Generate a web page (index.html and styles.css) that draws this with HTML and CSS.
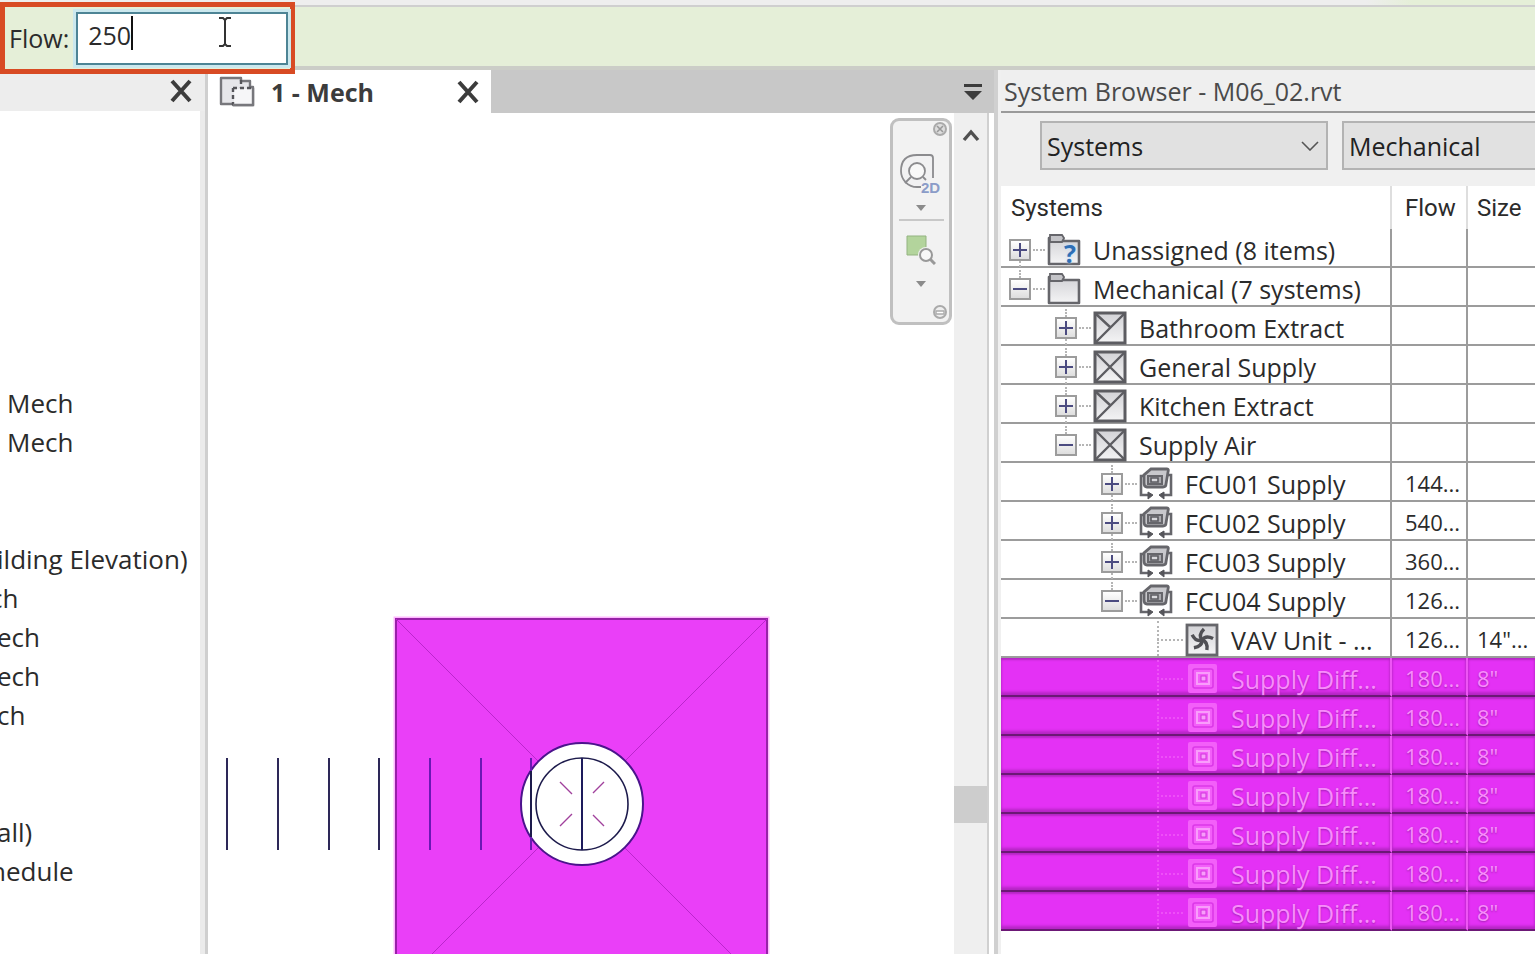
FILE: index.html
```
<!DOCTYPE html>
<html lang="en">
<head>
    <meta charset="UTF-8">
    <meta name="viewport" content="width=device-width, initial-scale=1.0">
    <title>System Browser - M06_02.rvt</title>
    <link rel="stylesheet" href="styles.css">
</head>
<body>
    <!-- Shared icons -->
    <svg class="icon-defs" aria-hidden="true">
        <defs>
            <linearGradient id="metal" x1="0" y1="0" x2="0" y2="1">
                <stop offset="0" stop-color="#d2d2d6" />
                <stop offset="1" stop-color="#f4f4f5" />
            </linearGradient>
        </defs>
        <symbol id="close" viewBox="0 0 24 24">
            <path d="M3 2l18 20M21 2L3 22" fill="none" stroke="#3c3c3c" stroke-width="4" />
        </symbol>
        <symbol id="folder" viewBox="0 0 34 34">
            <path d="M2 5h14v3h16v23H2z" fill="url(#metal)" stroke="#66666b" stroke-width="2.6" stroke-linejoin="round" />
            <path d="M3 2h12l2 3-2 4H3z" fill="#c4c4c8" stroke="#66666b" stroke-width="1.8" />
        </symbol>
        <symbol id="extract" viewBox="0 0 34 34">
            <rect x="2" y="2" width="30" height="30" fill="url(#metal)" stroke="#5c5c61" stroke-width="3" />
            <path d="M3 3l14 13M31 3L3 31" fill="none" stroke="#5c5c61" stroke-width="2.4" />
        </symbol>
        <symbol id="supply" viewBox="0 0 34 34">
            <rect x="2" y="2" width="30" height="30" fill="url(#metal)" stroke="#5c5c61" stroke-width="3" />
            <path d="M3 3l28 28M31 3L3 31" fill="none" stroke="#5c5c61" stroke-width="2.4" />
        </symbol>
        <symbol id="unit" viewBox="0 0 34 34">
            <path d="M6 9H2v19h9M28 8h4v20h-9" fill="none" stroke="#66666b" stroke-width="2.6" />
            <path d="M12 2h16q2 0 1 3l-2 12q0 3-3 3H8q-3 0-3-4V8z" fill="#c8c8cc" stroke="#66666b" stroke-width="2.8" />
            <path d="M9 9h14v8H9z" fill="#a9a9ae" stroke="#66666b" stroke-width="2" />
            <path d="M12 11h7v4h-7z" fill="#d8d8dc" stroke="#5c5c61" stroke-width="1.6" />
            <path d="M9 25l5 3-5 4zM25 25l-5 3 5 4z" fill="#55555a" stroke="#55555a" />
        </symbol>
        <symbol id="fan" viewBox="0 0 34 34">
            <rect x="2" y="2" width="30" height="30" fill="url(#metal)" stroke="#66666b" stroke-width="2.8" />
            <g fill="none" stroke="#505055" stroke-width="3.4">
                <path d="M17 17q-4-5 2-11" />
                <path d="M17 17q-4-5 2-11" transform="rotate(72 17 17)" />
                <path d="M17 17q-4-5 2-11" transform="rotate(144 17 17)" />
                <path d="M17 17q-4-5 2-11" transform="rotate(216 17 17)" />
                <path d="M17 17q-4-5 2-11" transform="rotate(288 17 17)" />
            </g>
        </symbol>
        <symbol id="diffuser" viewBox="0 0 34 34">
            <rect x="3" y="2" width="29" height="29" rx="2" fill="#f35ff9" />
            <rect x="8" y="7" width="20" height="19" rx="2" fill="none" stroke="#dc38e8" stroke-width="1.6" />
            <rect x="12" y="11" width="12" height="11" fill="none" stroke="#f99dfb" stroke-width="2" />
            <rect x="16" y="14" width="5" height="5" fill="#f99dfb" stroke="#cf35dc" />
        </symbol>
        <symbol id="arrow" viewBox="0 0 10 6">
            <path d="M0 0h10L5 6z" fill="#8b8b8b" />
        </symbol>
    </svg>

    <div class="ribbon-edge"></div>

    <form class="options-bar">
        <div class="flow-field">
            <label for="flow">Flow:</label>
            <input type="text" id="flow" value="250" />
            <span class="caret"></span>
            <svg class="text-cursor" viewBox="0 0 14 30">
                <path d="M1 1h4l2 2 2-2h4M1 29h4l2-2 2 2h4M7 2v26" fill="none" stroke="#333" stroke-width="2" />
            </svg>
        </div>
    </form>

    <main class="workspace">
        <aside class="project-browser">
            <header>
                <button type="button" class="icon-button" aria-label="Close project browser"><svg><use href="#close" /></svg></button>
            </header>
            <ul>
                <li class="nested">Mech</li>
                <li class="nested">Mech</li>
                <li></li>
                <li></li>
                <li>ilding Elevation)</li>
                <li class="cut">ch</li>
                <li>ech</li>
                <li>ech</li>
                <li>ch</li>
                <li></li>
                <li></li>
                <li>all)</li>
                <li class="cut">hedule</li>
            </ul>
        </aside>

        <section class="view">
            <div class="tabs">
                <div class="tab">
                    <svg class="tab-icon" viewBox="0 0 36 32">
                        <path d="M2 2h20v3h9v6h3v18H14v-1H2z" fill="#e6e6ea" stroke="#77777c" stroke-width="2.4" stroke-linejoin="round" />
                        <path d="M15 29V13h19v16z" fill="#f6f6f8" stroke="none" />
                        <path d="M14 12h19M14 12v17M22 4v8" fill="none" stroke="#55555a" stroke-width="2.4" stroke-dasharray="4 3" />
                        <path d="M34 12v17H14" fill="none" stroke="#77777c" stroke-width="2.4" />
                    </svg>
                    <span>1 - Mech</span>
                    <button type="button" class="icon-button" aria-label="Close tab"><svg><use href="#close" /></svg></button>
                </div>
                <button type="button" class="tab-menu" aria-label="Show views">
                    <svg viewBox="0 0 18 16"><path d="M0 0h18v3H0zM0 7h18l-9 9z" fill="#3c3c3c" /></svg>
                </button>
            </div>

            <div class="view-body">
                <div class="canvas">
                    <svg class="drawing">
                        <rect x="188" y="506" width="371" height="371" fill="#ea3ff8" stroke="#ffb8ff" stroke-width="5" />
                        <rect x="188" y="506" width="371" height="371" fill="#ea3ff8" stroke="#9722a8" stroke-width="2" />
                        <path d="M188 506l371 371M559 506L188 877" stroke="#bb25cd" />
                        <circle cx="374" cy="691" r="61" fill="#fff" stroke="#4b148c" stroke-width="2" />
                        <circle cx="374" cy="691" r="46" fill="none" stroke="#1d1b4c" stroke-width="1.6" />
                        <path d="M374 645v92" stroke="#1d1b5c" stroke-width="2" />
                        <path d="M352 669l12 12M396 669l-11 11M352 713l12-12M396 713l-11-11" stroke="#a0419c" stroke-width="1.4" />
                        <path d="M19 645v92M70 645v92M121 645v92M171 645v92" stroke="#2d2858" stroke-width="2" />
                        <path d="M222 645v92M273 645v92M323 645v92" stroke="#6b18b4" stroke-width="2" />
                        <path d="M323 658v66" stroke="#1d1b4c" stroke-width="2" />
                    </svg>

                    <div class="nav-bar">
                        <button type="button" class="nav-small" aria-label="Close navigation bar">
                            <svg viewBox="0 0 14 14"><circle cx="7" cy="7" r="6" fill="#ddd" stroke="#aaa" stroke-width="2" /><path d="M4 4l6 6M10 4l-6 6" stroke="#999" stroke-width="1.6" /></svg>
                        </button>
                        <button type="button" class="nav-wheel" aria-label="Steering wheel 2D">
                            <svg viewBox="0 0 44 42">
                                <path d="M22 34H18A16 16 0 0 1 2 18Q2 2 18 2h13q3 0 3 3v20" fill="#f1f1f2" stroke="#8b8b8e" stroke-width="1.8" />
                                <circle cx="18" cy="18" r="8" fill="#f8f8f8" stroke="#8b8b8e" stroke-width="1.8" />
                                <path d="M12 24l-6 6M24 24l3 3" stroke="#8b8b8e" stroke-width="1.8" />
                                <text x="22" y="40">2D</text>
                            </svg>
                        </button>
                        <svg class="nav-arrow"><use href="#arrow" /></svg>
                        <hr>
                        <button type="button" class="nav-zoom" aria-label="Zoom in region">
                            <svg viewBox="0 0 30 30">
                                <path d="M1 1h19v19H1z" fill="#b3d49c" stroke="#93b380" />
                                <circle cx="20" cy="20" r="8" fill="#f1f1f1" />
                                <circle cx="20" cy="20" r="6" fill="#f8f8f8" stroke="#999" stroke-width="2" />
                                <path d="M24 24l5 5" stroke="#999" stroke-width="3" />
                            </svg>
                        </button>
                        <svg class="nav-arrow"><use href="#arrow" /></svg>
                        <button type="button" class="nav-small nav-bottom" aria-label="Navigation bar options">
                            <svg viewBox="0 0 14 14"><circle cx="7" cy="7" r="6" fill="#eee" stroke="#aaa" stroke-width="2" /><path d="M3 6h8v3H3z" fill="#fff" stroke="#aaa" stroke-width="1.4" /></svg>
                        </button>
                    </div>
                </div>
                <div class="scrollbar">
                    <svg viewBox="0 0 18 13"><path d="M2 11l7-8 7 8" fill="none" stroke="#505050" stroke-width="3.4" /></svg>
                    <div class="thumb"></div>
                </div>
            </div>
        </section>

        <section class="system-browser">
            <h1>System Browser - M06_02.rvt</h1>
            <div class="filters">
                <div class="filter">
                    <select aria-label="View"><option>Systems</option></select>
                    <svg viewBox="0 0 18 10"><path d="M1 1l8 8 8-8" fill="none" stroke="#555" stroke-width="1.6" /></svg>
                </div>
                <div class="filter">
                    <select aria-label="Discipline"><option>Mechanical</option></select>
                </div>
            </div>

            <table>
                <colgroup>
                    <col class="col-systems">
                    <col class="col-flow">
                    <col>
                </colgroup>
                <thead>
                    <tr><th>Systems</th><th>Flow</th><th>Size</th></tr>
                </thead>
                <tbody>
                    <tr>
                        <td><div class="node root more"><button type="button" class="toggle" aria-label="Expand"></button><i></i><span class="unassigned"><svg><use href="#folder" /></svg><b>?</b></span><span>Unassigned (8 items)</span></div></td>
                        <td></td><td></td>
                    </tr>
                    <tr>
                        <td><div class="node"><button type="button" class="toggle open" aria-label="Collapse"></button><i></i><svg><use href="#folder" /></svg><span>Mechanical (7 systems)</span></div></td>
                        <td></td><td></td>
                    </tr>
                    <tr>
                        <td><div class="node level-1 more"><button type="button" class="toggle" aria-label="Expand"></button><i></i><svg><use href="#extract" /></svg><span>Bathroom Extract</span></div></td>
                        <td></td><td></td>
                    </tr>
                    <tr>
                        <td><div class="node level-1 more"><button type="button" class="toggle" aria-label="Expand"></button><i></i><svg><use href="#supply" /></svg><span>General Supply</span></div></td>
                        <td></td><td></td>
                    </tr>
                    <tr>
                        <td><div class="node level-1 more"><button type="button" class="toggle" aria-label="Expand"></button><i></i><svg><use href="#extract" /></svg><span>Kitchen Extract</span></div></td>
                        <td></td><td></td>
                    </tr>
                    <tr>
                        <td><div class="node level-1"><button type="button" class="toggle open" aria-label="Collapse"></button><i></i><svg><use href="#supply" /></svg><span>Supply Air</span></div></td>
                        <td></td><td></td>
                    </tr>
                    <tr>
                        <td><div class="node level-2 more"><button type="button" class="toggle" aria-label="Expand"></button><i></i><svg><use href="#unit" /></svg><span>FCU01 Supply</span></div></td>
                        <td>144...</td><td></td>
                    </tr>
                    <tr>
                        <td><div class="node level-2 more"><button type="button" class="toggle" aria-label="Expand"></button><i></i><svg><use href="#unit" /></svg><span>FCU02 Supply</span></div></td>
                        <td>540...</td><td></td>
                    </tr>
                    <tr>
                        <td><div class="node level-2 more"><button type="button" class="toggle" aria-label="Expand"></button><i></i><svg><use href="#unit" /></svg><span>FCU03 Supply</span></div></td>
                        <td>360...</td><td></td>
                    </tr>
                    <tr>
                        <td><div class="node level-2"><button type="button" class="toggle open" aria-label="Collapse"></button><i></i><svg><use href="#unit" /></svg><span>FCU04 Supply</span></div></td>
                        <td>126...</td><td></td>
                    </tr>
                    <tr>
                        <td><div class="node leaf"><i></i><svg><use href="#fan" /></svg><span>VAV Unit - ...</span></div></td>
                        <td>126...</td><td>14"...</td>
                    </tr>
                    <tr class="selected">
                        <td><div class="node leaf"><i></i><svg><use href="#diffuser" /></svg><span>Supply Diff...</span></div></td>
                        <td>180...</td><td>8"</td>
                    </tr>
                    <tr class="selected">
                        <td><div class="node leaf"><i></i><svg><use href="#diffuser" /></svg><span>Supply Diff...</span></div></td>
                        <td>180...</td><td>8"</td>
                    </tr>
                    <tr class="selected">
                        <td><div class="node leaf"><i></i><svg><use href="#diffuser" /></svg><span>Supply Diff...</span></div></td>
                        <td>180...</td><td>8"</td>
                    </tr>
                    <tr class="selected">
                        <td><div class="node leaf"><i></i><svg><use href="#diffuser" /></svg><span>Supply Diff...</span></div></td>
                        <td>180...</td><td>8"</td>
                    </tr>
                    <tr class="selected">
                        <td><div class="node leaf"><i></i><svg><use href="#diffuser" /></svg><span>Supply Diff...</span></div></td>
                        <td>180...</td><td>8"</td>
                    </tr>
                    <tr class="selected">
                        <td><div class="node leaf"><i></i><svg><use href="#diffuser" /></svg><span>Supply Diff...</span></div></td>
                        <td>180...</td><td>8"</td>
                    </tr>
                    <tr class="selected">
                        <td><div class="node leaf"><i></i><svg><use href="#diffuser" /></svg><span>Supply Diff...</span></div></td>
                        <td>180...</td><td>8"</td>
                    </tr>
                </tbody>
            </table>
        </section>
    </main>
</body>
</html>
```
FILE: styles.css
```
* {
    box-sizing: border-box;
}

body {
    margin: 0;
    height: 100vh;
    display: flex;
    flex-direction: column;
    overflow: hidden;
    background: #fff;
    color: #2b2b2b;
    font-family: "Open Sans", "Noto Sans", sans-serif;
    font-size: 25px;
    line-height: 32px;
}

button {
    padding: 0;
    border: none;
    background: none;
    cursor: pointer;
}

svg {
    display: block;
}

.icon-defs {
    position: absolute;
    width: 0;
    height: 0;
}

/* Options bar */
.ribbon-edge {
    height: 7px;
    flex: none;
    background: linear-gradient(to right, #eeeeee 89%, #e5efd8 92%);
    border-bottom: 2px solid #cfcfcf;
}

.options-bar {
    flex: none;
    height: 63px;
    background: #e5efd8;
    border-bottom: 4px solid #cbcdc7;
}

.flow-field {
    position: absolute;
    top: 2px;
    left: 0;
    z-index: 2;
    display: flex;
    align-items: center;
    gap: 7px;
    width: 295px;
    height: 72px;
    padding: 0 2px 0 4px;
    border: 5px solid #d84b24;
    background: #e5efd8;
}

.flow-field input {
    flex: 1;
    min-width: 0;
    height: 53px;
    padding: 0 10px 6px;
    border: 2px solid #4d8495;
    outline: none;
    background: #fff;
    box-shadow: 0 0 0 3px #cbe8ee;
    color: #2b2b2b;
    font: inherit;
}

.caret {
    position: absolute;
    left: 126px;
    top: 9px;
    width: 2px;
    height: 34px;
    background: #111;
}

.text-cursor {
    position: absolute;
    left: 213px;
    top: 10px;
    width: 14px;
    height: 30px;
}

.workspace {
    flex: 1;
    min-height: 0;
    display: flex;
}

.icon-button svg {
    width: 24px;
    height: 24px;
}

/* Project browser */
.project-browser {
    flex: none;
    width: 208px;
    overflow: hidden;
    border-right: 3px solid #cfcfcf;
    background: linear-gradient(to left, #ebebeb 5px, #fff 5px);
}

.project-browser header {
    display: flex;
    justify-content: flex-end;
    align-items: center;
    height: 41px;
    padding-right: 12px;
    background: #ededed;
}

.project-browser ul {
    margin: 0;
    padding: 273px 0 0;
    font-size: 26px;
    list-style: none;
}

.project-browser li {
    height: 39px;
    line-height: 39px;
    text-indent: -3px;
    white-space: nowrap;
}

.project-browser .nested {
    text-indent: 7px;
}

.project-browser .cut {
    text-indent: -10px;
}

/* View */
.view {
    flex: 1;
    min-width: 0;
    display: flex;
    flex-direction: column;
}

.tabs {
    flex: none;
    display: flex;
    justify-content: space-between;
    height: 43px;
    background: #c8c8c8;
}

.tab {
    display: flex;
    align-items: center;
    width: 283px;
    padding: 0 11px;
    background: #fff;
    color: #3c3c3c;
    font-weight: 700;
}

.tab span {
    flex: 1;
    padding-left: 16px;
}

.tab-icon {
    width: 36px;
    height: 32px;
}

.tab-menu {
    padding-right: 12px;
}

.tab-menu svg {
    width: 18px;
    height: 16px;
}

.view-body {
    flex: 1;
    min-height: 0;
    display: flex;
    padding-right: 5px;
}

.canvas {
    position: relative;
    flex: 1;
    min-width: 0;
}

.drawing {
    width: 100%;
    height: 100%;
}

.nav-bar {
    position: absolute;
    top: 5px;
    right: 2px;
    display: flex;
    flex-direction: column;
    align-items: center;
    width: 62px;
    height: 207px;
    padding: 1px 2px 3px;
    border: 3px solid #c0c0c0;
    border-radius: 9px;
    background: #f2f2f2;
}

.nav-small {
    align-self: flex-end;
}

.nav-small svg {
    width: 14px;
    height: 14px;
}

.nav-bottom {
    margin-top: auto;
}

.nav-wheel {
    margin-top: 17px;
}

.nav-wheel svg {
    width: 44px;
    height: 42px;
}

.nav-wheel text {
    fill: #8b9cc8;
    font-size: 15px;
    font-weight: 700;
}

.nav-arrow {
    width: 10px;
    height: 6px;
    margin-top: 10px;
}

.nav-bar hr {
    width: 45px;
    margin: 8px 0 14px;
    border: none;
    border-top: 2px solid #c8c8c8;
}

.nav-zoom svg {
    width: 30px;
    height: 30px;
}

.nav-zoom + .nav-arrow {
    margin-top: 16px;
}

.scrollbar {
    flex: none;
    display: flex;
    flex-direction: column;
    width: 35px;
    padding-top: 16px;
    border-right: 2px solid #d0d0d0;
    background: #efefef;
}

.scrollbar svg {
    width: 18px;
    height: 13px;
    margin-left: 8px;
}

.thumb {
    height: 37px;
    margin: 644px 0 0;
    background: #cdcdcd;
}

/* System browser */
.system-browser {
    flex: none;
    width: 541px;
    overflow: hidden;
    border-left: 4px solid #d0d0d0;
    padding-left: 3px;
    background: linear-gradient(to right, #f0f0f0 3px, #fff 3px);
}

.system-browser h1 {
    height: 43px;
    margin: 0;
    padding-left: 3px;
    border-bottom: 2px solid #9a9a9a;
    background: #efefef;
    color: #4a4a4a;
    font-size: 25px;
    font-weight: 400;
    line-height: 43px;
}

.filters {
    display: flex;
    gap: 14px;
    height: 73px;
    padding: 8px 0 16px 39px;
    background: #f0f0f0;
}

.filter {
    position: relative;
    flex: none;
    width: 288px;
}

.filter select {
    width: 100%;
    height: 100%;
    padding: 0 5px;
    border: 2px solid #b3b3b3;
    border-radius: 0;
    appearance: none;
    background: #e1e1e1;
    color: #222;
    font: inherit;
}

.filter svg {
    position: absolute;
    right: 9px;
    top: 20px;
    width: 18px;
    height: 10px;
}

table {
    width: 100%;
    table-layout: fixed;
    border-collapse: separate;
    border-spacing: 0;
    background: #fff;
}

.col-systems {
    width: 391px;
}

.col-flow {
    width: 76px;
}

th {
    height: 43px;
    padding: 0 0 0 10px;
    border-right: 2px solid #dedede;
    font-family: Roboto, sans-serif;
    font-size: 24px;
    font-weight: 400;
    text-align: left;
}

th + th {
    padding-left: 13px;
}

th:last-child {
    padding-left: 9px;
}

td {
    height: 39px;
    padding: 2px 0 0 13px;
    border-right: 2px solid #9c9c9c;
    border-bottom: 2px solid #9c9c9c;
    font-size: 22px;
    white-space: nowrap;
}

td:first-child {
    padding: 4px 0 0 8px;
    font-size: 25px;
}

td:last-child,
th:last-child {
    border-right: none;
}

td:last-child {
    padding-left: 9px;
}

.node {
    display: flex;
    align-items: center;
    height: 33px;
}

.level-1 {
    padding-left: 46px;
}

.level-2 {
    padding-left: 92px;
}

.leaf {
    position: relative;
    padding-left: 148px;
}

.node svg {
    flex: none;
    width: 34px;
    height: 34px;
}

.node i {
    width: 12px;
    margin: 0 2px;
    border-top: 2px dotted #b5b5b5;
}

.leaf i {
    width: 26px;
    margin: 0 2px 0 0;
}

.node > span:last-child {
    margin-left: 12px;
}

.toggle {
    position: relative;
    width: 22px;
    height: 22px;
    border: 2px solid #9c9c9c;
    background:
        linear-gradient(#4b4b80, #4b4b80) center / 14px 2px no-repeat,
        linear-gradient(#4b4b80, #4b4b80) center / 2px 14px no-repeat,
        linear-gradient(#fff, #dedede);
}

.toggle.open {
    background:
        linear-gradient(#4b4b80, #4b4b80) center / 14px 2px no-repeat,
        linear-gradient(#fff, #dedede);
}

.toggle::before,
.more .toggle::after,
.leaf::before {
    content: "";
    position: absolute;
    left: 8px;
    top: -10px;
    height: 8px;
    border-left: 2px dotted #b5b5b5;
}

.more .toggle::after {
    top: 20px;
    height: 6px;
}

.root .toggle::before {
    display: none;
}

.leaf::before {
    left: 148px;
    top: -2px;
    height: 35px;
}

.unassigned {
    position: relative;
}

.unassigned b {
    position: absolute;
    right: 5px;
    top: 4px;
    color: #2f6fb5;
    text-shadow: 0 0 3px #b9dcff;
}

.selected td {
    border-bottom-color: #6c1876;
    border-right-color: #ee55f5;
    background: #e431f5;
    box-shadow: inset 0 -3px 3px #b526c4, inset 0 2px 2px #b526c4;
    color: #f88dfb;
    text-shadow: 0 1px 2px #a321b2;
}

.selected i,
.selected .leaf::before {
    border-color: #ee4ff7;
}
```
